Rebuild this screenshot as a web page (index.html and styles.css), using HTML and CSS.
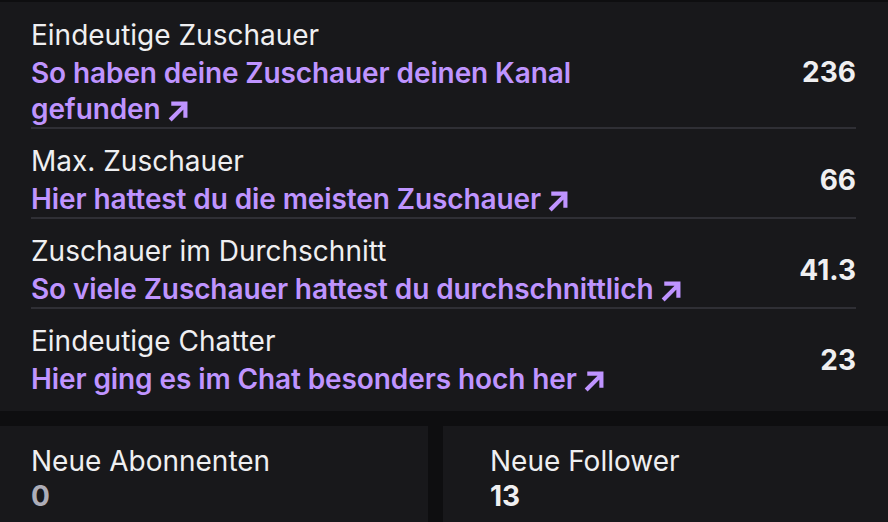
FILE: index.html
```html
<!DOCTYPE html>
<html lang="de">
<head>
    <meta charset="UTF-8">
    <meta name="viewport" content="width=device-width, initial-scale=1.0">
    <title>Stream-Statistiken</title>
    <link rel="stylesheet" href="styles.css">
</head>
<body>

<div class="page">
    <div class="card stats">
        <div class="row">
            <div class="info">
                <div class="label">Eindeutige Zuschauer</div>
                <a class="link" href="#">So haben deine Zuschauer deinen Kanal <span class="last">gefunden<span class="arrow"><svg viewBox="0 0 20 20" width="23" height="23"><path d="M4 17 L15 6 M5.5 4 H16 V14.5" fill="none" stroke="currentColor" stroke-width="3.6" stroke-linecap="square"/></svg></span></span></a>
            </div>
            <div class="value">236</div>
        </div>
        <div class="row">
            <div class="info">
                <div class="label">Max. Zuschauer</div>
                <a class="link" href="#">Hier hattest du die meisten <span class="last">Zuschauer<span class="arrow"><svg viewBox="0 0 20 20" width="23" height="23"><path d="M4 17 L15 6 M5.5 4 H16 V14.5" fill="none" stroke="currentColor" stroke-width="3.6" stroke-linecap="square"/></svg></span></span></a>
            </div>
            <div class="value">66</div>
        </div>
        <div class="row">
            <div class="info">
                <div class="label">Zuschauer im Durchschnitt</div>
                <a class="link" href="#">So viele Zuschauer hattest du <span class="last">durchschnittlich<span class="arrow"><svg viewBox="0 0 20 20" width="23" height="23"><path d="M4 17 L15 6 M5.5 4 H16 V14.5" fill="none" stroke="currentColor" stroke-width="3.6" stroke-linecap="square"/></svg></span></span></a>
            </div>
            <div class="value">41.3</div>
        </div>
        <div class="row">
            <div class="info">
                <div class="label">Eindeutige Chatter</div>
                <a class="link" href="#">Hier ging es im Chat besonders hoch <span class="last">her<span class="arrow"><svg viewBox="0 0 20 20" width="23" height="23"><path d="M4 17 L15 6 M5.5 4 H16 V14.5" fill="none" stroke="currentColor" stroke-width="3.6" stroke-linecap="square"/></svg></span></span></a>
            </div>
            <div class="value">23</div>
        </div>
    </div>

    <div class="bottom">
        <div class="card small">
            <div class="label">Neue Abonnenten</div>
            <div class="count muted">0</div>
        </div>
        <div class="card small">
            <div class="label">Neue Follower</div>
            <div class="count">13</div>
        </div>
    </div>
</div>

</body>
</html>
```

FILE: styles.css
```css
* {
    box-sizing: border-box;
}

body {
    margin: 0;
    background-color: #0e0e10;
    color: #efeff1;
    font-family: Inter, 'Noto Sans', sans-serif;
    overflow: hidden;
}

.page {
    width: 888px;
    height: 522px;
    padding-top: 2px;
}

.card {
    background-color: #18181b;
}

.stats {
    padding: 15px 32px 14px 31px;
}

.row {
    display: flex;
    align-items: center;
    justify-content: space-between;
    border-top: 2px solid #2f2f35;
    padding-top: 14px;
}

.row:first-child {
    border-top: none;
    padding-top: 0;
}

.info {
    flex: 1;
}

.label {
    font-size: 28px;
    line-height: 36px;
    color: #efeff1;
}

.link {
    display: block;
    max-width: 670px;
    margin-top: 2px;
    font-size: 28px;
    line-height: 36px;
    font-weight: 600;
    letter-spacing: -0.1px;
    color: #bf94ff;
    text-decoration: none;
}

.last {
    white-space: nowrap;
}

.arrow {
    display: inline-block;
    margin-left: 6px;
    vertical-align: -3px;
}

.arrow svg {
    display: block;
}

.value {
    font-size: 28px;
    font-weight: 700;
    color: #efeff1;
}

.bottom {
    display: flex;
    gap: 15px;
    margin-top: 15px;
}

.small {
    height: 97px;
    padding: 17px 31px 0 31px;
}

.small:first-child {
    flex: 0 0 428px;
}

.small:last-child {
    flex: 1;
    padding-left: 47px;
}

.count {
    font-size: 28px;
    line-height: 34px;
    font-weight: 700;
}

.count.muted {
    color: #adadb8;
}
```
